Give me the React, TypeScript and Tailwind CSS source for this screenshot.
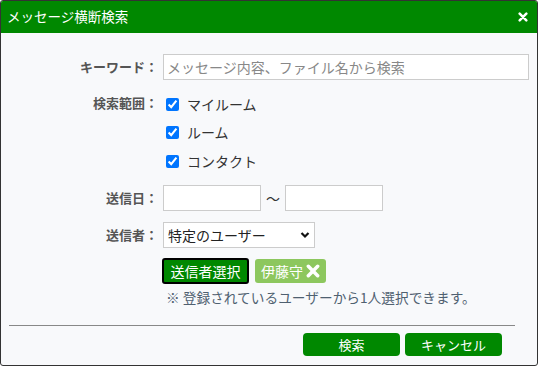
import { useState } from 'react';

const font = { fontFamily: '"Noto Sans CJK JP", "Noto Sans", sans-serif' };

function CloseIcon({ size = 11 }: { size?: number }) {
  return (
    <svg width={size} height={size} viewBox="0 0 12 12">
      <path d="M2 2 L10 10 M10 2 L2 10" stroke="white" strokeWidth="3" strokeLinecap="round" />
    </svg>
  );
}

export default function App() {
  const [keyword, setKeyword] = useState('');

  return (
    <div
      style={font}
      className="w-[538px] h-[366px] border border-[#333] rounded-[3px] overflow-hidden bg-[#f8f9fb] flex flex-col"
    >
      <div className="h-[32px] shrink-0 bg-[#008800] flex items-center justify-between pl-[6px] pr-[9px]">
        <span className="text-white text-[13.5px] leading-none">メッセージ横断検索</span>
        <CloseIcon size={10} />
      </div>

      <div className="flex flex-col pt-[21px] text-[14px]">
        <div className="flex items-center">
          <label className="w-[157px] text-right text-[13px] font-bold text-[#555]">キーワード：</label>
          <input
            value={keyword}
            onChange={(e) => setKeyword(e.target.value)}
            placeholder="メッセージ内容、ファイル名から検索"
            className="ml-[5px] w-[366px] h-[26px] border border-[#ccc] bg-white px-[3px] text-[14px] placeholder:text-[#888] outline-none"
          />
        </div>

        <div className="flex mt-[10px]">
          <label className="w-[157px] h-[25px] flex items-center justify-end text-[13px] font-bold text-[#555]">
            検索範囲：
          </label>
          <div className="ml-[5px] flex flex-col">
            {['マイルーム', 'ルーム', 'コンタクト'].map((t) => (
              <label key={t} className="h-[28.5px] flex items-center text-[#333]">
                <input type="checkbox" defaultChecked className="ml-[3px] w-[13px] h-[13px]" />
                <span className="ml-[8px]">{t}</span>
              </label>
            ))}
          </div>
        </div>

        <div className="flex items-center mt-[9.5px]">
          <label className="w-[157px] text-right text-[13px] font-bold text-[#555]">送信日：</label>
          <input className="ml-[5px] w-[98px] h-[26px] border border-[#ccc] bg-white outline-none" />
          <span className="w-[24px] text-center text-[#333]">〜</span>
          <input className="w-[98px] h-[26px] border border-[#ccc] bg-white outline-none" />
        </div>

        <div className="flex items-center mt-[11px]">
          <label className="w-[157px] text-right text-[13px] font-bold text-[#555]">送信者：</label>
          <div className="ml-[5px] relative w-[152px] h-[26px]">
            <select className="appearance-none w-full h-full border border-[#ccc] bg-white pl-[4px] text-[14px] text-[#222] outline-none">
              <option>特定のユーザー</option>
            </select>
            <svg
              className="absolute right-[5px] top-[9px] pointer-events-none"
              width="10"
              height="8"
              viewBox="0 0 10 8"
            >
              <path d="M1.5 2 L5 5.5 L8.5 2" stroke="#111" strokeWidth="2.2" fill="none" />
            </svg>
          </div>
        </div>

        <div className="flex items-center mt-[10px] pl-[161px] gap-[6px]">
          <button className="w-[87px] h-[26px] rounded-[3px] border-2 border-black bg-[#008800] text-white text-[14px] leading-none">
            送信者選択
          </button>
          <span className="h-[24px] px-[6px] rounded-[3px] bg-[#8dc75e] text-white text-[14px] flex items-center gap-[3px]">
            伊藤守
            <CloseIcon size={14} />
          </span>
        </div>

        <p className="mt-[4px] pl-[165px] text-[13.7px] leading-[18px] text-[#4f6070]">
          ※ 登録されているユーザーから1人選択できます。
        </p>

        <div className="mt-[19px] ml-[8px] w-[506px] border-t border-[#888]" />

        <div className="mt-[7px] w-[514px] flex justify-end gap-[5px] pr-[13px]">
          <button className="w-[97px] h-[23px] rounded-[4px] bg-[#008800] text-white text-[13px] leading-none">
            検索
          </button>
          <button className="w-[97px] h-[23px] rounded-[4px] bg-[#008800] text-white text-[13px] leading-none">
            キャンセル
          </button>
        </div>
      </div>
    </div>
  );
}
